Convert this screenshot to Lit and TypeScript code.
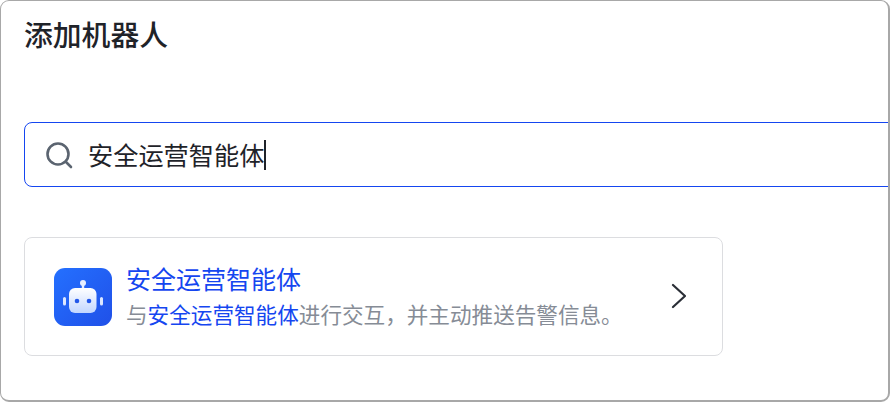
import { LitElement, html, css } from "lit";
import { customElement } from "lit/decorators.js";

@customElement("app-root")
export class AppRoot extends LitElement {
  static styles = css`
    :host { display: block; width: 890px; height: 402px; background: #fff; }
    * { box-sizing: border-box; }
    .frame {
      width: 890px; height: 402px; overflow: hidden; background: #fff;
      border: 1px solid #a8a8a8; border-bottom-width: 2px; border-right-width: 2px; border-radius: 9px;
      display: flex; flex-direction: column; padding: 0 0 0 23px;
      font-family: "Noto Sans CJK SC", "Noto Sans", sans-serif;
    }
    .title { margin: 13px 0 0; height: 40px; line-height: 40px; font-size: 28.8px; font-weight: 500; color: #1f2329; }
    .search {
      margin: 68px -12px 0 0; height: 65px; flex: none; display: flex; align-items: center;
      border: 1.5px solid #1546f0; border-radius: 8px; padding-left: 20px;
    }
    .search svg { width: 28px; height: 28px; flex: none; }
    .query { margin-left: 15px; font-size: 25.2px; color: #1f2329; line-height: 36px; display: flex; align-items: center; margin-top: -2px; }
    .caret { width: 2px; height: 30px; background: #1f2329; margin-top: 2px; }
    .card {
      margin-top: 50px; width: 699px; height: 119px; flex: none; display: flex; align-items: center;
      border: 1px solid #dcdde0; border-radius: 8px; padding: 0 36px 0 29px;
    }
    .bot { width: 58px; height: 58px; flex: none; }
    .text { margin-left: 14px; flex: 1; min-width: 0; margin-top: -1px; }
    .name { font-size: 25px; line-height: 32px; color: #1546f0; }
    .desc { font-size: 21.6px; line-height: 32px; color: #868c96; margin-top: 4px; white-space: nowrap; }
    .desc em { font-style: normal; color: #1546f0; }
    .chev { width: 16px; height: 26px; flex: none; margin-top: -1px; }
  `;

  render() {
    return html`<div class="frame" lang="zh-CN">
      <h1 class="title">添加机器人</h1>
      <div class="search">
        <svg viewBox="0 0 28 28" fill="none" stroke="#5b6470" stroke-width="2.6" stroke-linecap="round">
          <circle cx="13" cy="13" r="10.5"></circle>
          <path d="M21 21 L26 26"></path>
        </svg>
        <div class="query">安全运营智能体<span class="caret"></span></div>
      </div>
      <div class="card">
        <svg class="bot" viewBox="0 0 58 58">
          <defs>
            <linearGradient id="bg" x1="0" y1="0" x2="1" y2="1">
              <stop offset="0" stop-color="#2470ff"></stop>
              <stop offset="1" stop-color="#2050e8"></stop>
            </linearGradient>
            <linearGradient id="face" x1="0" y1="0" x2="0" y2="1">
              <stop offset="0" stop-color="#ffffff"></stop>
              <stop offset="1" stop-color="#c2d6ff"></stop>
            </linearGradient>
          </defs>
          <rect width="58" height="58" rx="11" fill="url(#bg)"></rect>
          <circle cx="29" cy="15" r="3" fill="#e6eeff"></circle>
          <rect x="27.8" y="15" width="2.4" height="6" fill="#e6eeff"></rect>
          <rect x="15" y="20" width="27.5" height="25" rx="6" fill="url(#face)"></rect>
          <rect x="9" y="29" width="3" height="8.5" rx="1.5" fill="#dce7ff"></rect>
          <rect x="46" y="29" width="3" height="8.5" rx="1.5" fill="#dce7ff"></rect>
          <circle cx="23" cy="33" r="2.3" fill="#2458ea"></circle>
          <circle cx="35" cy="33" r="2.3" fill="#2458ea"></circle>
        </svg>
        <div class="text">
          <div class="name">安全运营智能体</div>
          <div class="desc">与<em>安全运营智能体</em>进行交互&#65292;并主动推送告警信息。</div>
        </div>
        <svg class="chev" viewBox="0 0 16 26" fill="none" stroke="#2a2e36" stroke-width="2.2" stroke-linecap="round" stroke-linejoin="miter">
          <path d="M3 2 L15 13 L3 24"></path>
        </svg>
      </div>
    </div>`;
  }
}
